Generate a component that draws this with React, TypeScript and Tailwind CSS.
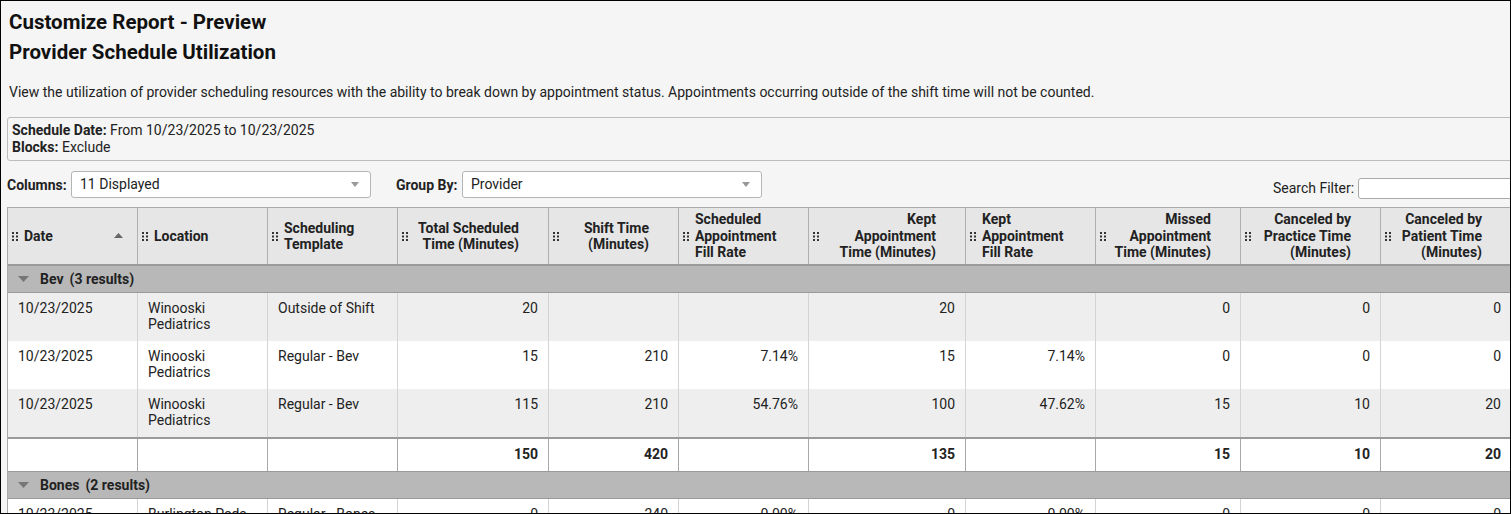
import React from "react";

const W = [130, 130, 130, 151, 130, 130, 157, 130, 145, 140, 131];

type H = { lines: string[]; align: "left" | "right"; sort?: boolean };
const headers: H[] = [
  { lines: ["Date"], align: "left", sort: true },
  { lines: ["Location"], align: "left" },
  { lines: ["Scheduling", "Template"], align: "left" },
  { lines: ["Total Scheduled", "Time (Minutes)"], align: "right" },
  { lines: ["Shift Time", "(Minutes)"], align: "right" },
  { lines: ["Scheduled", "Appointment", "Fill Rate"], align: "left" },
  { lines: ["Kept", "Appointment", "Time (Minutes)"], align: "right" },
  { lines: ["Kept", "Appointment", "Fill Rate"], align: "left" },
  { lines: ["Missed", "Appointment", "Time (Minutes)"], align: "right" },
  { lines: ["Canceled by", "Practice Time", "(Minutes)"], align: "right" },
  { lines: ["Canceled by", "Patient Time", "(Minutes)"], align: "right" },
];

const bevRows: string[][] = [
  ["10/23/2025", "Winooski Pediatrics", "Outside of Shift", "20", "", "", "20", "", "0", "0", "0"],
  ["10/23/2025", "Winooski Pediatrics", "Regular - Bev", "15", "210", "7.14%", "15", "7.14%", "0", "0", "0"],
  ["10/23/2025", "Winooski Pediatrics", "Regular - Bev", "115", "210", "54.76%", "100", "47.62%", "15", "10", "20"],
];
const bevTotal = ["", "", "", "150", "420", "", "135", "", "15", "10", "20"];
const bonesRows: string[][] = [
  ["10/23/2025", "Burlington Peds", "Regular - Bones", "0", "240", "0.00%", "0", "0.00%", "0", "0", "0"],
];

function Handle() {
  return (
    <svg width="6" height="9" viewBox="0 0 6 9" className="shrink-0">
      <rect x="0" y="0" width="2" height="2" fill="#333" />
      <rect x="4" y="0" width="2" height="2" fill="#333" />
      <rect x="0" y="3.5" width="2" height="2" fill="#333" />
      <rect x="4" y="3.5" width="2" height="2" fill="#333" />
      <rect x="0" y="7" width="2" height="2" fill="#333" />
      <rect x="4" y="7" width="2" height="2" fill="#333" />
    </svg>
  );
}

function Caret({ color = "#999", w = 8, h = 5 }: { color?: string; w?: number; h?: number }) {
  return (
    <svg width={w} height={h} viewBox={`0 0 ${w} ${h}`} className="shrink-0">
      <path d={`M0 0 L${w} 0 L${w / 2} ${h} Z`} fill={color} />
    </svg>
  );
}

function Select({ value, w }: { value: string; w: string }) {
  return (
    <div
      className={`${w} shrink-0 h-[27px] bg-white border border-[#b5b5b5] rounded-[3px] flex items-center pl-[8px] pr-[11px] text-[14px] text-[#222]`}
    >
      <span className="flex-1">{value}</span>
      <Caret />
    </div>
  );
}

function DataRow({ cells, bg }: { cells: string[]; bg: string }) {
  return (
    <div className={`flex h-[48px] ${bg}`}>
      {cells.map((c, i) => (
        <div
          key={i}
          style={{ width: W[i] }}
          className={`shrink-0 border-r border-[#d4d4d4] pt-[7px] leading-[16px] ${
            i < 3 ? "pl-[10px] pr-[8px] text-left" : "pr-[10px] text-right"
          }`}
        >
          {c}
        </div>
      ))}
    </div>
  );
}

function GroupRow({ label, count }: { label: string; count: string }) {
  return (
    <div className="flex items-center h-[27px] bg-[#b8b8b8] border-b border-[#9a9a9a] pl-[10px] font-bold">
      <Caret color="#777" w={11} h={6} />
      <span className="ml-[11px]">{label}</span>
      <span className="ml-[6px]">{count}</span>
    </div>
  );
}

export default function App() {
  return (
    <div className="w-[1511px] h-[514px] border border-black bg-[#f5f5f5] overflow-hidden font-['Roboto',sans-serif] text-[#222]">
      <div className="pl-[8px] pt-[6px]">
        <div className="h-[30px] leading-[30px] text-[20.5px] font-bold text-[#111] whitespace-nowrap">Customize Report - Preview</div>
        <div className="h-[30px] leading-[30px] text-[20.5px] font-bold text-[#111] whitespace-nowrap">Provider Schedule Utilization</div>
      </div>
      <div className="mt-[15px] pl-[8px] leading-[20px] text-[14px] whitespace-nowrap">
        View the utilization of provider scheduling resources with the ability to break down by appointment status. Appointments occurring outside of the shift time will not be counted.
      </div>
      <div className="mt-[15px] ml-[6px] w-[1520px] h-[44px] border border-[#bdbdbd] rounded-[3px] pt-[4px] pl-[4px] text-[14px] leading-[16.5px]">
        <div>
          <span className="font-bold">Schedule Date:</span> From 10/23/2025 to 10/23/2025
        </div>
        <div>
          <span className="font-bold">Blocks:</span> Exclude
        </div>
      </div>
      <div className="mt-[10px] ml-[6px] flex items-start h-[27px] text-[14px] w-[1600px]">
        <div className="shrink-0 w-[64px] h-[27px] leading-[28px] font-bold whitespace-nowrap">Columns:</div>
        <Select value="11 Displayed" w="w-[300px]" />
        <div className="shrink-0 ml-[25px] w-[66px] h-[27px] leading-[28px] font-bold whitespace-nowrap">Group By:</div>
        <Select value="Provider" w="w-[300px]" />
        <div className="ml-[511px] mt-[7px] flex items-center h-[21px] shrink-0">
          <span className="shrink-0 text-[14px] w-[85px] whitespace-nowrap">Search Filter:</span>
          <div className="shrink-0 w-[200px] h-[21px] bg-white border border-[#aaa] rounded-l-[3px]" />
        </div>
      </div>
      <div className="mt-[9px] ml-[6px] w-[1505px] text-[14px] border-l border-[#aaa]">
        <div className="flex h-[59px] bg-[#e6e6e6] border-t border-[#aaa] border-b-2 border-b-[#9a9a9a] font-bold text-[#222]">
          {headers.map((h, i) => (
            <div
              key={i}
              style={{ width: W[i] }}
              className="relative shrink-0 flex items-center border-r border-[#b0b0b0] pl-[4px] pr-[29px]"
            >
              <Handle />
              <div className={`ml-[6px] flex-1 leading-[16.5px] ${h.align === "right" ? "text-right" : "text-left"}`}>
                {h.lines.map((l, j) => (
                  <div key={j} className="whitespace-nowrap">
                    {l}
                  </div>
                ))}
              </div>
              {h.sort && (
                <div className="absolute right-[14px] top-[25px]">
                  <svg width="9" height="5" viewBox="0 0 9 5">
                    <path d="M0 5 L9 5 L4.5 0 Z" fill="#666" />
                  </svg>
                </div>
              )}
            </div>
          ))}
        </div>
        <GroupRow label="Bev" count="(3 results)" />
        <DataRow cells={bevRows[0]} bg="bg-[#eeeeee]" />
        <DataRow cells={bevRows[1]} bg="bg-white" />
        <DataRow cells={bevRows[2]} bg="bg-[#eeeeee]" />
        <div className="flex h-[34px] bg-white border-t-2 border-[#9a9a9a] font-bold">
          {bevTotal.map((c, i) => (
            <div
              key={i}
              style={{ width: W[i] }}
              className="shrink-0 border-r border-[#a8a8a8] pt-[7px] leading-[16px] pr-[10px] text-right"
            >
              {c}
            </div>
          ))}
        </div>
        <div className="border-t border-[#9a9a9a]">
          <GroupRow label="Bones" count="(2 results)" />
        </div>
        <DataRow cells={bonesRows[0]} bg="bg-white" />
      </div>
    </div>
  );
}
